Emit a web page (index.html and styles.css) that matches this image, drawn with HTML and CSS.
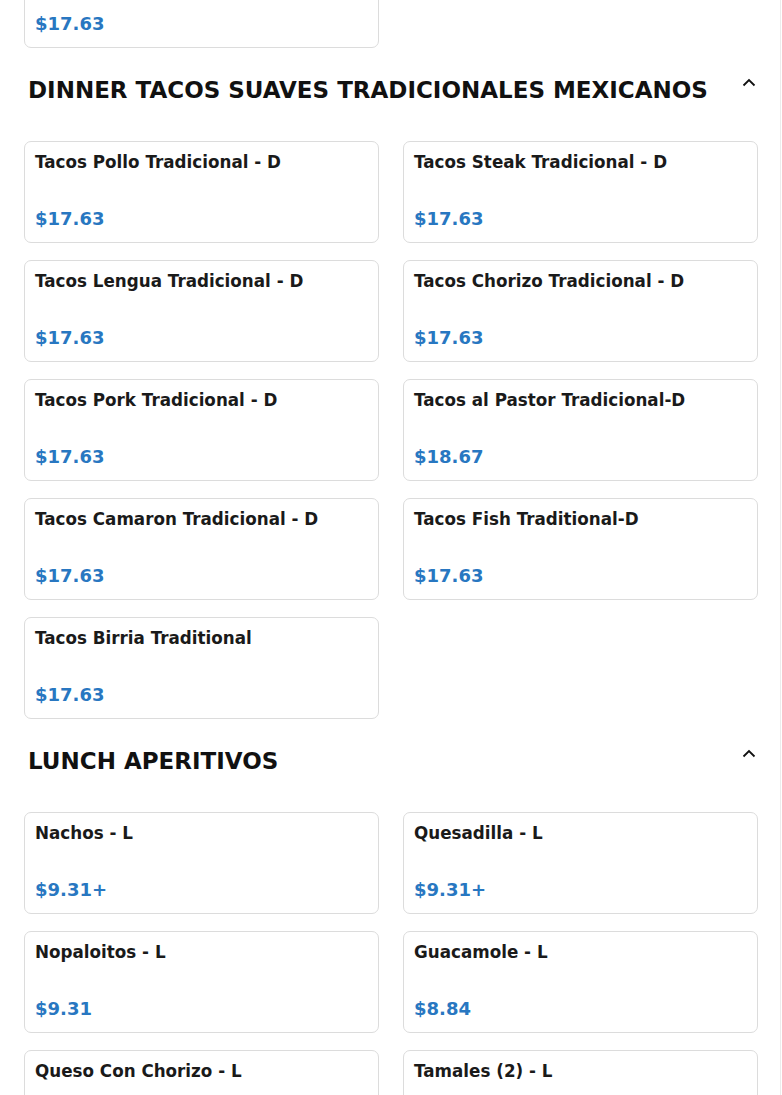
FILE: index.html
```html
<!DOCTYPE html>
<html lang="en">
<head>
    <meta charset="UTF-8">
    <title>Menu</title>
    <link rel="stylesheet" href="styles.css">
</head>
<body>
    <div class="page">
        <section class="menu-section menu-section--cut">
            <div class="item-grid">
                <div class="item-card">
                    <div class="item-name">Tacos Birria Traditional</div>
                    <div class="item-price">$17.63</div>
                </div>
            </div>
        </section>

        <section class="menu-section">
            <div class="section-head">
                <h2>DINNER TACOS SUAVES TRADICIONALES MEXICANOS</h2>
                <svg class="chevron" viewBox="0 0 14 9" width="14" height="9"><path d="M1.5 7.5L7 2l5.5 5.5"/></svg>
            </div>
            <div class="item-grid">
                <div class="item-card">
                    <div class="item-name">Tacos Pollo Tradicional - D</div>
                    <div class="item-price">$17.63</div>
                </div>
                <div class="item-card">
                    <div class="item-name">Tacos Steak Tradicional - D</div>
                    <div class="item-price">$17.63</div>
                </div>
                <div class="item-card">
                    <div class="item-name">Tacos Lengua Tradicional - D</div>
                    <div class="item-price">$17.63</div>
                </div>
                <div class="item-card">
                    <div class="item-name">Tacos Chorizo Tradicional - D</div>
                    <div class="item-price">$17.63</div>
                </div>
                <div class="item-card">
                    <div class="item-name">Tacos Pork Tradicional - D</div>
                    <div class="item-price">$17.63</div>
                </div>
                <div class="item-card">
                    <div class="item-name">Tacos al Pastor Tradicional-D</div>
                    <div class="item-price">$18.67</div>
                </div>
                <div class="item-card">
                    <div class="item-name">Tacos Camaron Tradicional - D</div>
                    <div class="item-price">$17.63</div>
                </div>
                <div class="item-card">
                    <div class="item-name">Tacos Fish Traditional-D</div>
                    <div class="item-price">$17.63</div>
                </div>
                <div class="item-card">
                    <div class="item-name">Tacos Birria Traditional</div>
                    <div class="item-price">$17.63</div>
                </div>
            </div>
        </section>

        <section class="menu-section">
            <div class="section-head">
                <h2>LUNCH APERITIVOS</h2>
                <svg class="chevron" viewBox="0 0 14 9" width="14" height="9"><path d="M1.5 7.5L7 2l5.5 5.5"/></svg>
            </div>
            <div class="item-grid">
                <div class="item-card">
                    <div class="item-name">Nachos - L</div>
                    <div class="item-price">$9.31+</div>
                </div>
                <div class="item-card">
                    <div class="item-name">Quesadilla - L</div>
                    <div class="item-price">$9.31+</div>
                </div>
                <div class="item-card">
                    <div class="item-name">Nopaloitos - L</div>
                    <div class="item-price">$9.31</div>
                </div>
                <div class="item-card">
                    <div class="item-name">Guacamole - L</div>
                    <div class="item-price">$8.84</div>
                </div>
                <div class="item-card">
                    <div class="item-name">Queso Con Chorizo - L</div>
                    <div class="item-price">$10.35</div>
                </div>
                <div class="item-card">
                    <div class="item-name">Tamales (2) - L</div>
                    <div class="item-price">$9.31</div>
                </div>
            </div>
        </section>
    </div>
</body>
</html>
```

FILE: styles.css
```css
body {
    font-family: 'DejaVu Sans', sans-serif;
    background-color: #ffffff;
    color: #1c1c1c;
    margin: 0;
}

.page {
    width: 781px;
    border-right: 1px solid #ececec;
    padding: 0 22px 0 24px;
    box-sizing: border-box;
    overflow: hidden;
}

.menu-section--cut {
    margin-top: -54px;
}

.section-head {
    display: flex;
    align-items: center;
    justify-content: space-between;
    padding: 0 0 0 4px;
    margin: 26px 0 35px;
    height: 32px;
}

.section-head h2 {
    margin: 0;
    font-size: 23px;
    color: #111111;
}

.chevron {
    fill: none;
    stroke: #111111;
    stroke-width: 1.8;
    align-self: flex-start;
    margin: 4px 2px 0 0;
}

.item-grid {
    display: grid;
    grid-template-columns: 1fr 1fr;
    column-gap: 24px;
    row-gap: 17px;
}

.item-card {
    display: flex;
    flex-direction: column;
    justify-content: space-between;
    height: 102px;
    box-sizing: border-box;
    padding: 10px 10px 13px;
    border: 1px solid #dcdcdc;
    border-radius: 7px;
}

.item-name {
    font-size: 16.75px;
    font-weight: bold;
    color: #1a1a1a;
}

.item-price {
    font-size: 18px;
    font-weight: bold;
    color: #2877c1;
}
```
